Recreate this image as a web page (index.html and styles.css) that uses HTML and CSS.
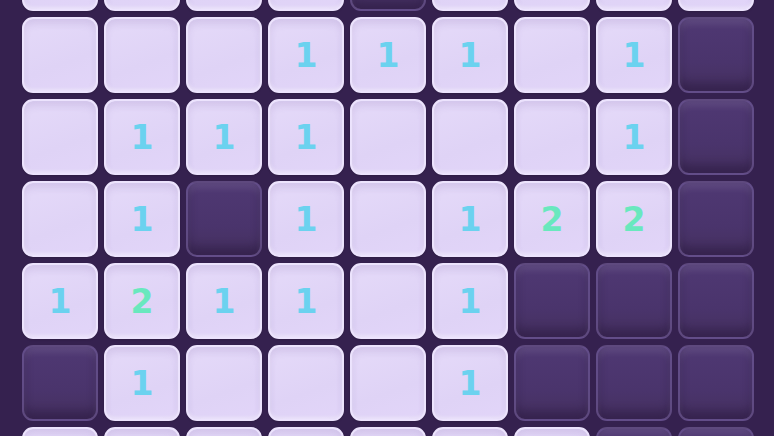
FILE: index.html
```html
<!DOCTYPE html>
<html>
<head>
<meta charset="utf-8">
<link rel="stylesheet" href="styles.css">
</head>
<body>
<div class="viewport">
  <div class="board">
    <div class="cell open"></div><div class="cell open"></div><div class="cell open"></div><div class="cell open"></div><div class="cell hidden"></div><div class="cell open"></div><div class="cell open"></div><div class="cell open"></div><div class="cell open"></div>

    <div class="cell open"></div><div class="cell open"></div><div class="cell open"></div><div class="cell open n1">1</div><div class="cell open n1">1</div><div class="cell open n1">1</div><div class="cell open"></div><div class="cell open n1">1</div><div class="cell hidden"></div>

    <div class="cell open"></div><div class="cell open n1">1</div><div class="cell open n1">1</div><div class="cell open n1">1</div><div class="cell open"></div><div class="cell open"></div><div class="cell open"></div><div class="cell open n1">1</div><div class="cell hidden"></div>

    <div class="cell open"></div><div class="cell open n1">1</div><div class="cell hidden"></div><div class="cell open n1">1</div><div class="cell open"></div><div class="cell open n1">1</div><div class="cell open n2">2</div><div class="cell open n2">2</div><div class="cell hidden"></div>

    <div class="cell open n1">1</div><div class="cell open n2">2</div><div class="cell open n1">1</div><div class="cell open n1">1</div><div class="cell open"></div><div class="cell open n1">1</div><div class="cell hidden"></div><div class="cell hidden"></div><div class="cell hidden"></div>

    <div class="cell hidden"></div><div class="cell open n1">1</div><div class="cell open"></div><div class="cell open"></div><div class="cell open"></div><div class="cell open n1">1</div><div class="cell hidden"></div><div class="cell hidden"></div><div class="cell hidden"></div>

    <div class="cell open"></div><div class="cell open"></div><div class="cell open"></div><div class="cell open"></div><div class="cell open"></div><div class="cell open"></div><div class="cell open"></div><div class="cell hidden"></div><div class="cell hidden"></div>
  </div>
</div>
</body>
</html>
```

FILE: styles.css
```css
html, body {
  margin: 0;
  padding: 0;
  background: #35214f;
  height: 100%;
  overflow: hidden;
}

.viewport {
  width: 774px;
  height: 436px;
  overflow: hidden;
}

.board {
  display: grid;
  grid-template-columns: repeat(9, 76px);
  grid-auto-rows: 76px;
  gap: 6px;
  margin-top: -65px;
  margin-left: 22px;
}

.cell {
  box-sizing: border-box;
  border-radius: 11px;
  display: flex;
  align-items: center;
  justify-content: center;
  font-family: "DejaVu Sans", sans-serif;
  font-weight: bold;
  font-size: 33px;
  line-height: 1;
  padding-top: 1px;
}

.open {
  background: linear-gradient(160deg, #e5daf9 0%, #dfd3f6 60%, #e2d5f9 100%);
  border: 2px solid #ece3fd;
  box-shadow:
    inset 0 5px 7px rgba(90, 60, 140, 0.12),
    inset 0 -2px 3px rgba(255, 255, 255, 0.35),
    0 1px 2px rgba(0, 0, 0, 0.15);
}

.hidden {
  background: linear-gradient(180deg, #4f3873 0%, #4a346c 60%, #45305f 100%);
  border: 2px solid rgba(125, 105, 165, 0.45);
  box-shadow:
    inset 0 6px 6px rgba(255, 255, 255, 0.08),
    inset 0 -8px 10px rgba(20, 8, 40, 0.30);
}

.n1 { color: #6bd2ef; }
.n2 { color: #69e8be; }
```
